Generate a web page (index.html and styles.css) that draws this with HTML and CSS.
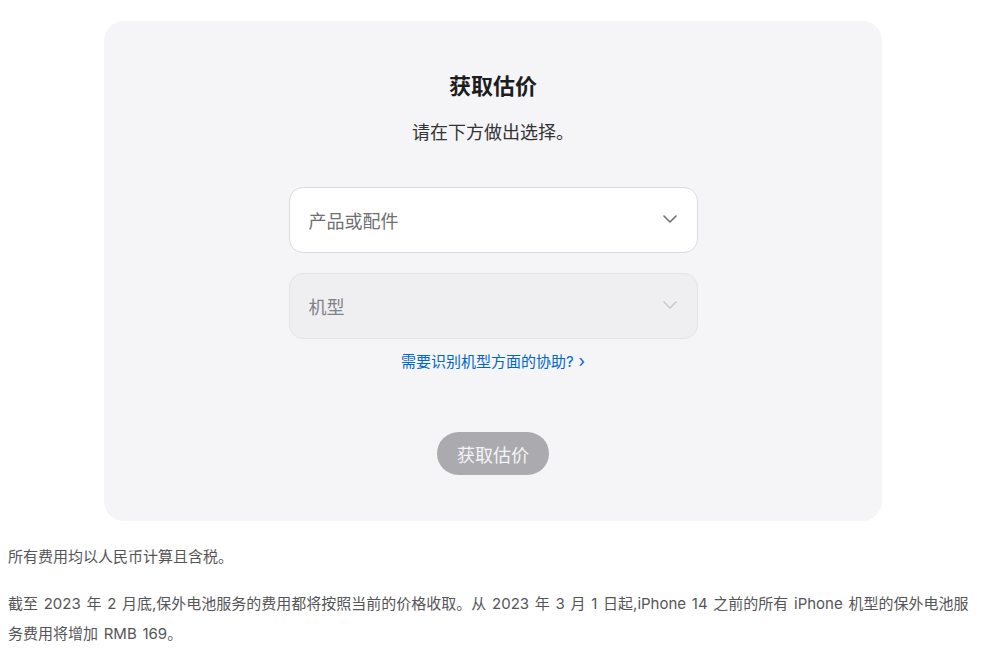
FILE: index.html
```html
<!DOCTYPE html>
<html lang="zh-CN">
<head>
<meta charset="utf-8">
<title>获取估价</title>
<link rel="stylesheet" href="styles.css">
</head>
<body>
<section class="card">
  <h2 class="title">获取估价</h2>
  <p class="subtitle">请在下方做出选择。</p>
  <div class="fields">
    <div class="select">
      <span class="select-label">产品或配件</span>
      <svg class="chev" width="16" height="10" viewBox="0 0 16 10"><path d="M2 2 L8 8 L14 2" fill="none" stroke="currentColor" stroke-width="1.6" stroke-linecap="round" stroke-linejoin="round"/></svg>
    </div>
    <div class="select disabled">
      <span class="select-label">机型</span>
      <svg class="chev" width="16" height="10" viewBox="0 0 16 10"><path d="M2 2 L8 8 L14 2" fill="none" stroke="currentColor" stroke-width="1.3" stroke-linecap="round" stroke-linejoin="round"/></svg>
    </div>
  </div>
  <a class="help" href="#">需要识别机型方面的协助?<span class="arrow">›</span></a>
  <button class="btn" type="button">获取估价</button>
</section>
<p class="note">所有费用均以人民币计算且含税。</p>
<p class="note">截至 2023 年 2 月底,保外电池服务的费用都将按照当前的价格收取。从 2023 年 3 月 1 日起,iPhone 14 之前的所有 iPhone 机型的保外电池服务费用将增加 RMB 169。</p>
</body>
</html>
```
FILE: styles.css
```css
* { box-sizing: border-box; }
body {
  margin: 8px;
  background: #ffffff;
  font-family: "Inter", "Noto Sans CJK SC", sans-serif;
  color: #1d1d1f;
}
.card {
  width: 778px;
  margin: 13px 0 0 96px;
  background: #f5f5f7;
  border-radius: 20px;
  padding: 50px 0 46px;
  display: flex;
  flex-direction: column;
  align-items: center;
}
.title {
  margin: 0;
  font-size: 22px;
  line-height: 30px;
  font-weight: 700;
  color: #1d1d1f;
}
.subtitle {
  margin: 19px 0 0;
  font-size: 18px;
  line-height: 26px;
  color: #333336;
}
.fields {
  margin-top: 41px;
  width: 409px;
  display: flex;
  flex-direction: column;
  gap: 20px;
}
.select {
  height: 66px;
  border-radius: 14px;
  background: #ffffff;
  border: 1px solid #dcdce0;
  display: flex;
  align-items: center;
  justify-content: space-between;
  padding: 0 19px 0 19px;
  color: #86868b;
}
.select-label {
  font-size: 18px;
  color: #6e6e73;
}
.chev { color: #6e6e73; margin-top: -2px; }
.select.disabled {
  background: #efeff2;
  border-color: #e4e4e8;
}
.select.disabled .select-label { color: #818186; }
.select.disabled .chev { color: #c4c4c8; }
.help {
  margin-top: 11px;
  font-size: 15px;
  line-height: 22px;
  color: #0066cc;
  text-decoration: none;
}
.help .arrow {
  margin-left: 5px;
  font-size: 17px;
}
.btn {
  margin-top: 59px;
  height: 43px;
  padding: 0 20px;
  border: none;
  border-radius: 22px;
  background: #ababaf;
  color: #f4f4f6;
  font-family: "Inter", "Noto Sans CJK SC", sans-serif;
  font-size: 18px;
}
.note {
  margin: 21px 0 0;
  font-size: 15px;
  line-height: 30px;
  color: #555558;
  word-spacing: 1.5px;
}
.note + .note { margin-top: 17px; }
```
